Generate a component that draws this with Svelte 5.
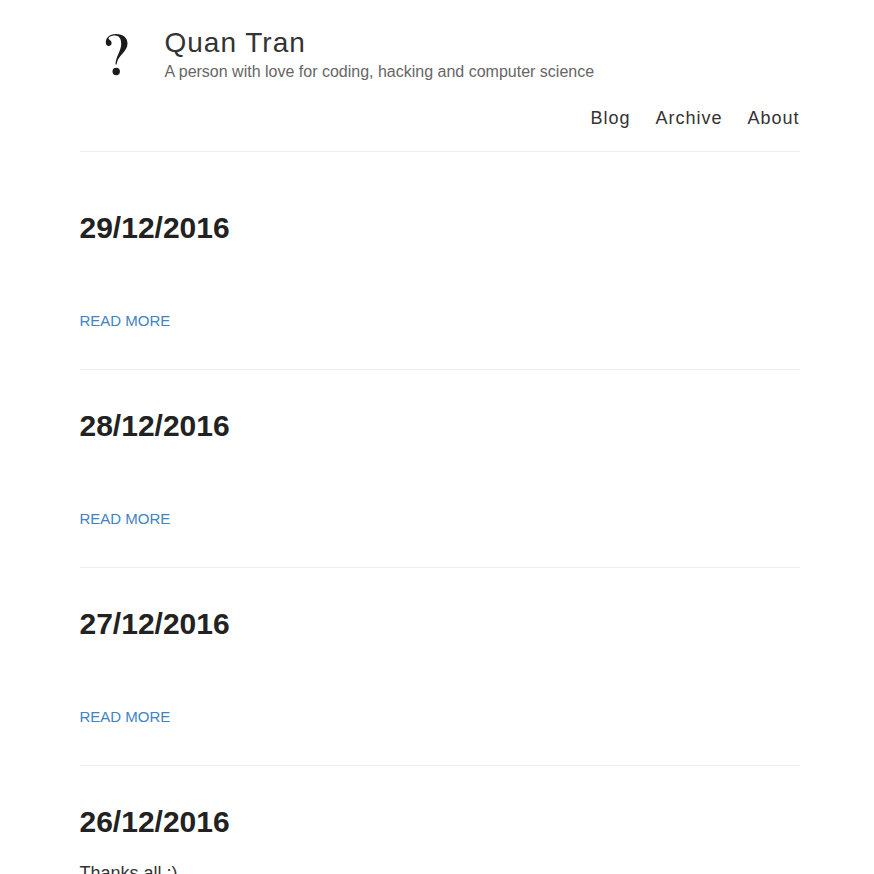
<script>
  const posts = [
    { date: '29/12/2016', text: '' },
    { date: '28/12/2016', text: '' },
    { date: '27/12/2016', text: '' },
    { date: '26/12/2016', text: 'Thanks all :)' }
  ];
</script>

<div class="page">
  <header>
    <div class="brand">
      <a class="avatar" href="#home" aria-label="Home">
        <svg viewBox="0 0 70 70" width="70" height="70" aria-hidden="true">
          <path d="M35.5 44.500C35.700 36.500 41.200 31 41.200 24C41.200 18.500 39 15.600 35 15.600C31.600 15.600 28.600 17 28.600 18.600C28.600 19.900 31.600 20.400 31.600 23.100C31.600 24.900 30.300 26.100 28.700 26.100C26.900 26.100 25.800 24.400 25.800 22.200C25.800 17.500 30.200 14.100 36.300 14.100C42.900 14.100 47.500 17.800 47.500 23.600C47.500 32 37.500 35.500 36.600 44.500Z" fill="#1b1b1b" />
          <circle cx="36.200" cy="51.500" r="3.700" fill="#1b1b1b" />
        </svg>
      </a>
      <div class="info">
        <h1><a href="#home">Quan Tran</a></h1>
        <p>A person with love for coding, hacking and computer science</p>
      </div>
    </div>
    <nav>
      <a href="#blog">Blog</a>
      <a href="#archive">Archive</a>
      <a href="#about">About</a>
    </nav>
  </header>
  <main>
    {#each posts as post}
      <article>
        <h2><a href="#post">{post.date}</a></h2>
        <div class="entry">{post.text}</div>
        <a class="more" href="#post">READ MORE</a>
      </article>
    {/each}
  </main>
</div>

<style>
  :global(html) {
    scrollbar-width: none;
  }
  :global(body) {
    background: #fff;
    color: #333;
    font: 18px/27px "Liberation Sans", Arial, sans-serif;
    height: 100vh;
    overflow: hidden auto;
    scrollbar-width: none;
  }
  .page {
    max-width: 720px;
    margin: 0 auto;
    padding: 0 20px 0 25px;
  }
  header {
    padding: 20px 0;
    border-bottom: 1px solid #eee;
  }
  .brand {
    display: flex;
    gap: 15px;
    height: 70px;
  }
  .avatar,
  svg {
    display: block;
    width: 70px;
    height: 70px;
  }
  a {
    color: inherit;
    text-decoration: none;
  }
  h1 {
    margin: 7px 0 0;
    font-size: 28px;
    line-height: 32px;
    font-weight: 400;
    letter-spacing: 1px;
  }
  p {
    margin: 0;
    font-size: 16px;
    line-height: 26px;
    color: #666;
  }
  nav {
    display: flex;
    justify-content: flex-end;
    gap: 25px;
    height: 26px;
    margin-top: 15px;
    letter-spacing: 1px;
  }
  main {
    padding-top: 20px;
  }
  article {
    padding: 36px 0;
    border-bottom: 1px solid #eee;
  }
  h2 {
    margin: 0;
    font-size: 30px;
    line-height: 40px;
    color: #222;
  }
  .entry {
    min-height: 27px;
    margin: 18px 0 16px;
  }
  .more {
    display: block;
    font-size: 15px;
    line-height: 24px;
    color: #4183c4;
  }
</style>
